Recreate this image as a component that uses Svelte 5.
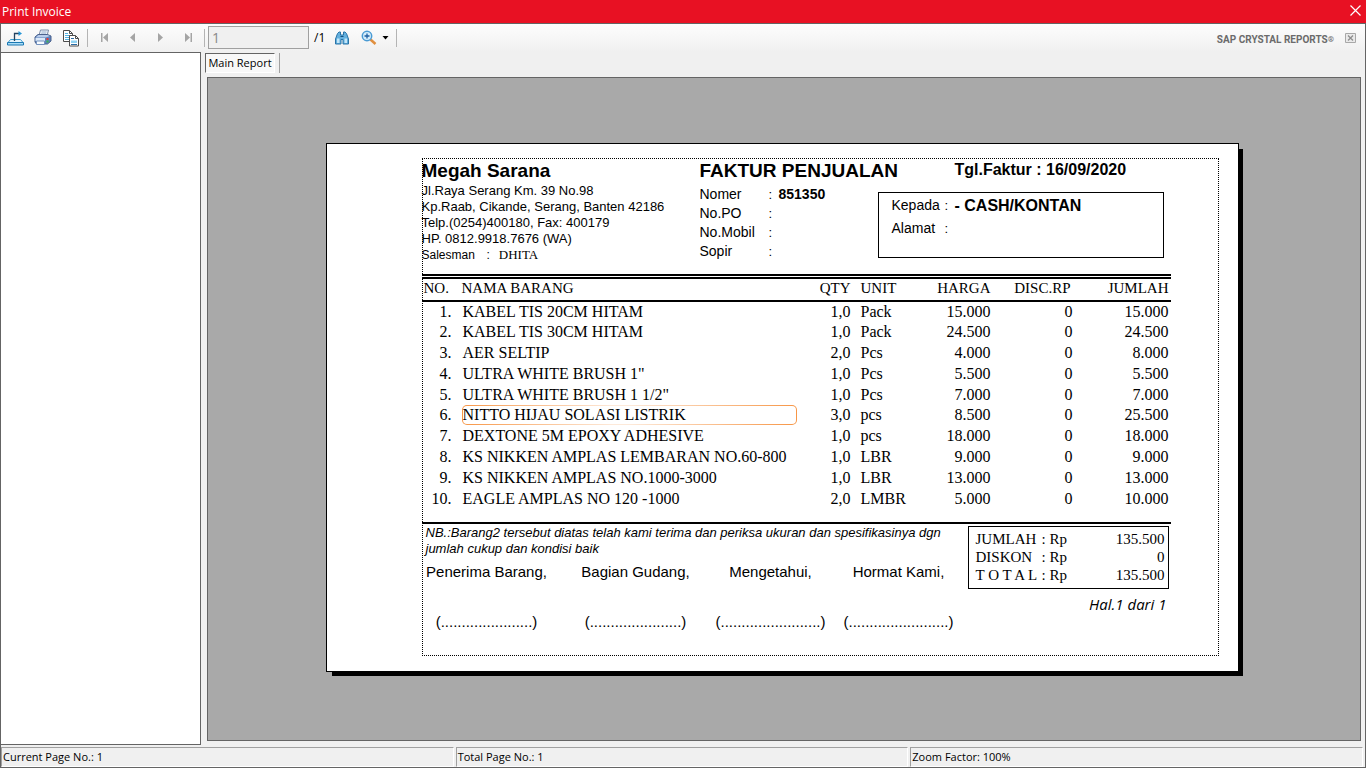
<script lang="ts">
  let pageNumber = 1;
  let totalPages = 1;
  let zoomFactor = 100;

  const items = [
    { name: "KABEL TIS 20CM HITAM", qty: "1,0", unit: "Pack", price: "15.000", disc: "0", total: "15.000" },
    { name: "KABEL TIS 30CM HITAM", qty: "1,0", unit: "Pack", price: "24.500", disc: "0", total: "24.500" },
    { name: "AER SELTIP", qty: "2,0", unit: "Pcs", price: "4.000", disc: "0", total: "8.000" },
    { name: "ULTRA WHITE BRUSH 1\"", qty: "1,0", unit: "Pcs", price: "5.500", disc: "0", total: "5.500" },
    { name: "ULTRA WHITE BRUSH 1 1/2\"", qty: "1,0", unit: "Pcs", price: "7.000", disc: "0", total: "7.000" },
    { name: "NITTO HIJAU SOLASI LISTRIK", qty: "3,0", unit: "pcs", price: "8.500", disc: "0", total: "25.500" },
    { name: "DEXTONE 5M EPOXY ADHESIVE", qty: "1,0", unit: "pcs", price: "18.000", disc: "0", total: "18.000" },
    { name: "KS NIKKEN AMPLAS LEMBARAN NO.60-800", qty: "1,0", unit: "LBR", price: "9.000", disc: "0", total: "9.000" },
    { name: "KS NIKKEN AMPLAS NO.1000-3000", qty: "1,0", unit: "LBR", price: "13.000", disc: "0", total: "13.000" },
    { name: "EAGLE AMPLAS NO 120 -1000", qty: "2,0", unit: "LMBR", price: "5.000", disc: "0", total: "10.000" }
  ];
  let selected = 5;

  const address = [
    "Jl.Raya Serang Km. 39 No.98",
    "Kp.Raab, Cikande, Serang, Banten 42186",
    "Telp.(0254)400180, Fax: 400179",
    "HP. 0812.9918.7676 (WA)"
  ];

  const details = [
    { label: "Nomer", value: "851350" },
    { label: "No.PO", value: "" },
    { label: "No.Mobil", value: "" },
    { label: "Sopir", value: "" }
  ];

  const totals = [
    { label: "JUMLAH", value: "135.500" },
    { label: "DISKON", value: "0" },
    { label: "T O T A L", value: "135.500" }
  ];

  const signatures = [
    { label: "Penerima Barang,", dots: 22 },
    { label: "Bagian Gudang,", dots: 22 },
    { label: "Mengetahui,", dots: 24 },
    { label: "Hormat Kami,", dots: 24 }
  ];
</script>

<div class="window">
  <header class="titlebar">
    <span>Print Invoice</span>
    <button class="close" aria-label="Close">
      <svg width="11" height="11" viewBox="0 0 11 11"><path d="M.5 .5l10 10M10.500 .5l-10 10" stroke="#fff" stroke-width="1.2" /></svg>
    </button>
  </header>

  <div class="toolbar">
    <button class="tool" aria-label="Export report">
      <svg width="17" height="16" viewBox="0 0 17 16" fill="none">
        <path d="M3.500 9.500h10l2.500 3H1z" fill="#e4f4fc" stroke="#3c9ccf" />
        <path d="M.5 12.500h16v2.500H.5z" fill="#a9dcf5" stroke="#1b79b4" />
        <path d="M7.500 11V3.500H12" stroke="#22425f" stroke-width="1.300" />
        <path d="M11.500 1l3.500 2.500L11.500 6z" fill="#2696d6" />
      </svg>
    </button>
    <button class="tool" aria-label="Print report">
      <svg width="18" height="17" viewBox="0 0 18 17">
        <path d="M5 6.500L6.500 1h8L13 7z" fill="#eef5fd" stroke="#7a8ba8" />
        <path d="M7.500 3h5M7 5h5" stroke="#9ab0cc" />
        <path d="M1 8l3-2.500h9.500L17 7v5l-3.500 3H2.500L1 13z" fill="#5d82bd" stroke="#4c628c" />
        <path d="M1.500 8.500h10l4.500-1.500-2.500-1H4.500z" fill="#b9cdec" />
        <path d="M1.500 9h9.500v3H1.500z" fill="#dce9f8" />
        <path d="M2.500 12h8v3.500h-8z" fill="#f6fbff" stroke="#7391be" />
        <path d="M12.500 9h2v2h-2z" fill="#e33c37" />
        <path d="M12.500 11.500h2v2h-2z" fill="#3bb54e" />
      </svg>
    </button>
    <button class="tool" aria-label="Copy">
      <svg width="18" height="18" viewBox="0 0 18 18" fill="none">
        <path d="M1.500 1.500h6l3 3v8h-9z" fill="#fff" stroke="#4d4d4d" />
        <path d="M7.500 1.500v3h3" stroke="#4d4d4d" />
        <path d="M3 4.500h3M3 6.500h5M3 8.500h5M3 10.500h4" stroke="#52b3e4" />
        <path d="M7.500 6.500h6l3 3v7.500h-9z" fill="#fff" stroke="#4d4d4d" />
        <path d="M13.500 6.500v3h3" stroke="#4d4d4d" />
        <path d="M9 9.500h3M9 15.500h6" stroke="#2a6ba3" />
        <path d="M9 11.500h6v2.500H9z" fill="#8ed2f3" />
      </svg>
    </button>
    <span class="sep"></span>
    <button class="tool" aria-label="First page" disabled>
      <svg width="9" height="11" viewBox="0 0 9 11"><path d="M1 1h1.500v9H1zM8 1v9L3 5.500z" fill="#a5a5a5" /></svg>
    </button>
    <button class="tool" aria-label="Previous page" disabled>
      <svg width="9" height="11" viewBox="0 0 9 11"><path d="M7 1v9L2 5.500z" fill="#a5a5a5" /></svg>
    </button>
    <button class="tool" aria-label="Next page" disabled>
      <svg width="9" height="11" viewBox="0 0 9 11"><path d="M2 1v9l5-4.500z" fill="#a5a5a5" /></svg>
    </button>
    <button class="tool" aria-label="Last page" disabled>
      <svg width="9" height="11" viewBox="0 0 9 11"><path d="M6.500 1H8v9H6.500zM1 1v9l5-4.500z" fill="#a5a5a5" /></svg>
    </button>
    <span class="sep"></span>
    <input class="page-input" type="text" value={pageNumber} aria-label="Page number" disabled />
    <span class="page-total">/{totalPages}</span>
    <button class="tool" aria-label="Find text">
      <svg width="16" height="14" viewBox="0 0 16 14">
        <path d="M3.500 2.500L5 1h1.500v3h3V1H11l1.500 1.500L14.500 8v5H9V8.500H7V13H1.500V8z" fill="#63b0de" stroke="#2a74a8" />
        <path d="M3 7.500h2.500v4.500H3zM10.500 7.500H13v4.500h-2.500z" fill="#c4e6f8" />
        <path d="M6.500 5.500h3" stroke="#174f7c" />
      </svg>
    </button>
    <button class="tool zoom" aria-label="Zoom">
      <svg width="16" height="16" viewBox="0 0 16 16" fill="none">
        <path d="M9.500 9.500l5 4.500" stroke="#e08f3f" stroke-width="2.500" />
        <circle cx="6" cy="6" r="4.700" fill="#d5edfb" stroke="#4a9bd4" stroke-width="1.500" />
        <path d="M3.500 6h5M6 3.500v5" stroke="#1e5fa3" stroke-width="1.300" />
      </svg>
      <svg width="7" height="4" viewBox="0 0 7 4"><path d="M.5 0h6l-3 3.500z" fill="#000" /></svg>
    </button>
    <span class="sep"></span>
    <span class="brand">SAP CRYSTAL REPORTS<span class="reg">®</span></span>
    <button class="close-view" aria-label="Close view" disabled>
      <svg width="11" height="10" viewBox="0 0 11 10" fill="none">
        <path d="M.5 .5h10v9H.5z" fill="#eaeaea" stroke="#a8a8a8" />
        <path d="M3 2.500l5 5M8 2.500l-5 5" stroke="#8e8e8e" stroke-width="1.300" />
      </svg>
    </button>
  </div>

  <div class="body">
    <aside class="tree"></aside>
    <section class="report">
      <div class="tabs">
        <button class="tab">Main Report</button>
        <span class="tab-sep"></span>
      </div>
      <div class="viewport">
        <article class="paper">
          <div class="frame">
            <div class="invoice-head">
              <div class="company">
                <h1>Megah Sarana</h1>
                {#each address as line}
                  <p>{line}</p>
                {/each}
                <p class="salesman"><span>Salesman</span><span>:</span><b>DHITA</b></p>
              </div>
              <div class="details">
                <h1>FAKTUR PENJUALAN</h1>
                {#each details as d}
                  <p><span>{d.label}</span><i>:</i><b>{d.value}</b></p>
                {/each}
              </div>
              <div class="customer">
                <h2>Tgl.Faktur : 16/09/2020</h2>
                <div class="customer-box">
                  <p><span>Kepada</span><i>:</i><b>- CASH/KONTAN</b></p>
                  <p><span>Alamat</span><i>:</i></p>
                </div>
              </div>
            </div>

            <table class="items">
              <colgroup>
                <col class="c-no" /><col class="c-name" /><col class="c-qty" /><col class="c-unit" />
                <col class="c-price" /><col class="c-disc" /><col />
              </colgroup>
              <thead>
                <tr>
                  <th class="left">NO.</th>
                  <th class="name">NAMA BARANG</th>
                  <th>QTY</th>
                  <th class="unit">UNIT</th>
                  <th>HARGA</th>
                  <th class="disc">DISC.RP</th>
                  <th class="last">JUMLAH</th>
                </tr>
              </thead>
              <tbody>
                {#each items as item, i}
                  <tr>
                    <td class="no">{i + 1}.</td>
                    <td class="name"><span class:selected={i === selected}>{item.name}</span></td>
                    <td>{item.qty}</td>
                    <td class="unit">{item.unit}</td>
                    <td>{item.price}</td>
                    <td>{item.disc}</td>
                    <td class="last">{item.total}</td>
                  </tr>
                {/each}
              </tbody>
            </table>

            <div class="invoice-foot">
              <div class="foot-left">
                <p class="note">NB.:Barang2 tersebut diatas telah kami terima dan periksa ukuran dan spesifikasinya dgn<br />jumlah cukup dan kondisi baik</p>
                <div class="signatures">
                  {#each signatures as s}
                    <div class="signature">
                      <span>{s.label}</span>
                      <span>({".".repeat(s.dots)})</span>
                    </div>
                  {/each}
                </div>
              </div>
              <div class="foot-right">
                <table class="totals">
                  <tbody>
                    {#each totals as t}
                      <tr>
                        <th>{t.label}</th>
                        <td>: Rp</td>
                        <td class="amount">{t.value}</td>
                      </tr>
                    {/each}
                  </tbody>
                </table>
                <p class="page-of">Hal.1 dari 1</p>
              </div>
            </div>
          </div>
        </article>
      </div>
    </section>
  </div>

  <footer class="statusbar">
    <span>Current Page No.: {pageNumber}</span>
    <span>Total Page No.: {totalPages}</span>
    <span>Zoom Factor: {zoomFactor}%</span>
  </footer>
</div>

<style>
  :global(body) {
    margin: 0;
  }
  * {
    box-sizing: border-box;
  }
  h1, h2, p {
    margin: 0;
  }
  button {
    padding: 0;
    border: none;
    background: none;
  }
  .window {
    display: flex;
    flex-direction: column;
    min-height: 100vh;
    background: #f0f0f0;
    border: 1px solid #646464;
    border-top: none;
    font-family: "Open Sans", "Noto Sans", sans-serif;
    font-size: 12px;
    color: #000;
  }
  .titlebar {
    display: flex;
    justify-content: space-between;
    align-items: center;
    height: 24px;
    margin: 0 -1px;
    padding: 0 5px 0 2px;
    background: #e81123;
    border-bottom: 1px solid #646464;
    color: #fff;
  }
  .close {
    display: flex;
  }
  .close svg {
    margin-bottom: 3px;
  }

  .toolbar {
    display: flex;
    align-items: center;
    height: 28px;
    padding-bottom: 1px;
    background: linear-gradient(#fdfdfd, #f0f0f0);
  }
  .tool {
    display: flex;
    align-items: center;
    justify-content: center;
    width: 28px;
    height: 26px;
  }
  .sep {
    width: 1px;
    height: 18px;
    margin: 0 2px;
    background: #b4b4b4;
  }
  .page-input {
    width: 101px;
    height: 23px;
    margin-left: 1px;
    padding: 0 3px;
    border: 1px solid #a0a0a0;
    background: #f0f0f0;
    color: #8a8a8a;
    font: 14px "Open Sans", sans-serif;
  }
  .page-total {
    width: 19px;
    padding-left: 5px;
  }
  .zoom {
    width: 38px;
    gap: 5px;
  }
  .brand {
    margin-left: auto;
    padding-top: 3px;
    color: #6b6b6b;
    font: bold 10px Roboto, "Liberation Sans", sans-serif;
  }
  .reg {
    font-size: 8px;
    vertical-align: 1px;
  }
  .close-view {
    display: flex;
    margin: 0 9px 0 11px;
  }

  .body {
    display: flex;
    flex: 1;
  }
  .tree {
    width: 200px;
    background: #fff;
    border: 1px solid #646464;
    border-left: none;
  }
  .report {
    display: flex;
    flex-direction: column;
    flex: 1;
    padding: 0 4px 4px 4px;
  }
  .tabs {
    display: flex;
    align-items: flex-start;
    gap: 4px;
    height: 25px;
    padding-top: 1px;
  }
  .tab {
    width: 70px;
    height: 20px;
    padding-bottom: 2px;
    border: 1px solid #fff;
    border-top-color: #646464;
    border-left-color: #646464;
    background: #f8f8f8;
    color: #000;
    font: 11px "Open Sans", sans-serif;
    white-space: nowrap;
  }
  .tab-sep {
    width: 1px;
    height: 20px;
    background: #a0a0a0;
  }
  .viewport {
    display: flex;
    align-items: center;
    justify-content: center;
    flex: 1;
    margin-left: 2px;
    padding: 0 4px 4px 0;
    background: #a9a9a9;
    border: 1px solid #646464;
  }

  /* printed page */
  .paper {
    width: 913px;
    padding: 14px 19px 15px 95px;
    background: #fff;
    border: 1px solid #000;
    box-shadow: 5px 5px 0 -1px #000;
    font-family: "Liberation Sans", Arial, sans-serif;
    font-size: 13px;
  }
  .frame {
    padding-right: 48px;
    outline: 1px dotted #000;
    outline-offset: -1px;
  }
  .invoice-head {
    display: grid;
    grid-template-columns: 278px 178px 1fr;
    height: 116px;
  }
  h1 {
    font-size: 19px;
    line-height: 25px;
    white-space: nowrap;
  }
  .company p {
    line-height: 16px;
  }
  .company .salesman {
    display: flex;
    font-size: 12px;
  }
  .salesman span:first-child {
    width: 65px;
  }
  .salesman b {
    padding-left: 9px;
    font: 13px/16px "Liberation Serif", "Times New Roman", serif;
  }
  .details h1 {
    margin-bottom: 2px;
  }
  .details p {
    display: flex;
    line-height: 19px;
  }
  .details span {
    width: 69px;
    font-size: 14px;
  }
  .details i,
  .customer-box i {
    width: 10px;
    font-style: normal;
  }
  .details b {
    font-size: 14px;
  }
  h2 {
    padding-left: 77px;
    font-size: 16px;
    line-height: 24px;
  }
  .customer-box {
    width: 286px;
    height: 66px;
    margin-top: 10px;
    padding: 1px 13px;
    border: 1px solid #000;
  }
  .customer-box p {
    display: flex;
    line-height: 23px;
  }
  .customer-box span {
    width: 53px;
    font-size: 14px;
  }
  .customer-box b {
    font-size: 16px;
  }

  table {
    border-collapse: collapse;
    font-family: "Liberation Serif", "Times New Roman", serif;
  }
  th {
    font-weight: normal;
  }
  .items {
    width: 100%;
    height: 236px;
    table-layout: fixed;
    border-top: 5px double #000;
    border-collapse: separate;
    border-spacing: 0;
    margin-bottom: 12px;
  }
  .c-no { width: 39px; }
  .c-name { width: 336px; }
  .c-qty { width: 54px; }
  .c-unit { width: 76px; }
  .c-price { width: 64px; }
  .c-disc { width: 82px; }
  .items th,
  .items td {
    padding: 0;
    text-align: right;
    white-space: nowrap;
  }
  .items th {
    height: 23px;
    border-bottom: 2px solid #000;
    font-size: 15px;
    line-height: 18px;
    vertical-align: top;
  }
  .items td {
    font-size: 16px;
    line-height: 19px;
    vertical-align: top;
  }
  .items .left {
    padding-left: 2px;
    text-align: left;
  }
  .items .no {
    padding-right: 9px;
  }
  .items .name {
    padding-left: 1px;
    text-align: left;
  }
  .name span {
    display: block;
    height: 20px;
    border: 1px solid transparent;
    border-radius: 5px;
    line-height: 18px;
  }
  .name .selected {
    background:
      linear-gradient(#fff, #fff) padding-box,
      linear-gradient(90deg, #f79646, #fde9d9 45%, #fde9d9 50%, #f79646) border-box;
  }
  .items .unit {
    padding-left: 10px;
    text-align: left;
  }
  .items .disc {
    padding-right: 2px;
  }
  .items .last {
    padding-right: 2px;
  }

  .invoice-foot {
    display: flex;
    justify-content: space-between;
    min-height: 134px;
    padding-right: 2px;
    border-top: 2px solid #000;
  }
  .note {
    padding: 1px 0 0 4px;
    font-style: italic;
    line-height: 16px;
    white-space: nowrap;
  }
  .signatures {
    display: grid;
    grid-template-columns: 130px 168px 102px 154px;
    margin-top: 5px;
    font-size: 15px;
    line-height: 20px;
  }
  .signature {
    display: flex;
    flex-direction: column;
    align-items: center;
    gap: 30px;
    white-space: nowrap;
  }
  .foot-right {
    width: 201px;
    flex-shrink: 0;
    padding-top: 2px;
  }
  .foot-left {
    width: 546px;
  }
  .totals {
    width: 100%;
    border: 1px solid #000;
    border-collapse: separate;
    border-spacing: 0;
    padding: 3px 3px 4px 7px;
    font-size: 15px;
    line-height: 18px;
  }
  .totals th,
  .totals td {
    padding: 0;
    text-align: left;
    white-space: nowrap;
  }
  .totals th {
    width: 66px;
  }
  .totals .amount {
    text-align: right;
  }
  .page-of {
    padding: 5px 2px 0 0;
    font: italic 15px/20px "Open Sans", sans-serif;
    text-align: right;
  }

  .statusbar {
    display: grid;
    grid-template-columns: 1fr 1fr 1fr;
    gap: 2px;
    height: 22px;
    padding: 2px 2px 0 0;
  }
  .statusbar span {
    padding-left: 1px;
    border: 1px solid #fff;
    border-top-color: #a0a0a0;
    border-left-color: #a0a0a0;
    font-size: 11px;
    line-height: 18px;
  }
</style>
